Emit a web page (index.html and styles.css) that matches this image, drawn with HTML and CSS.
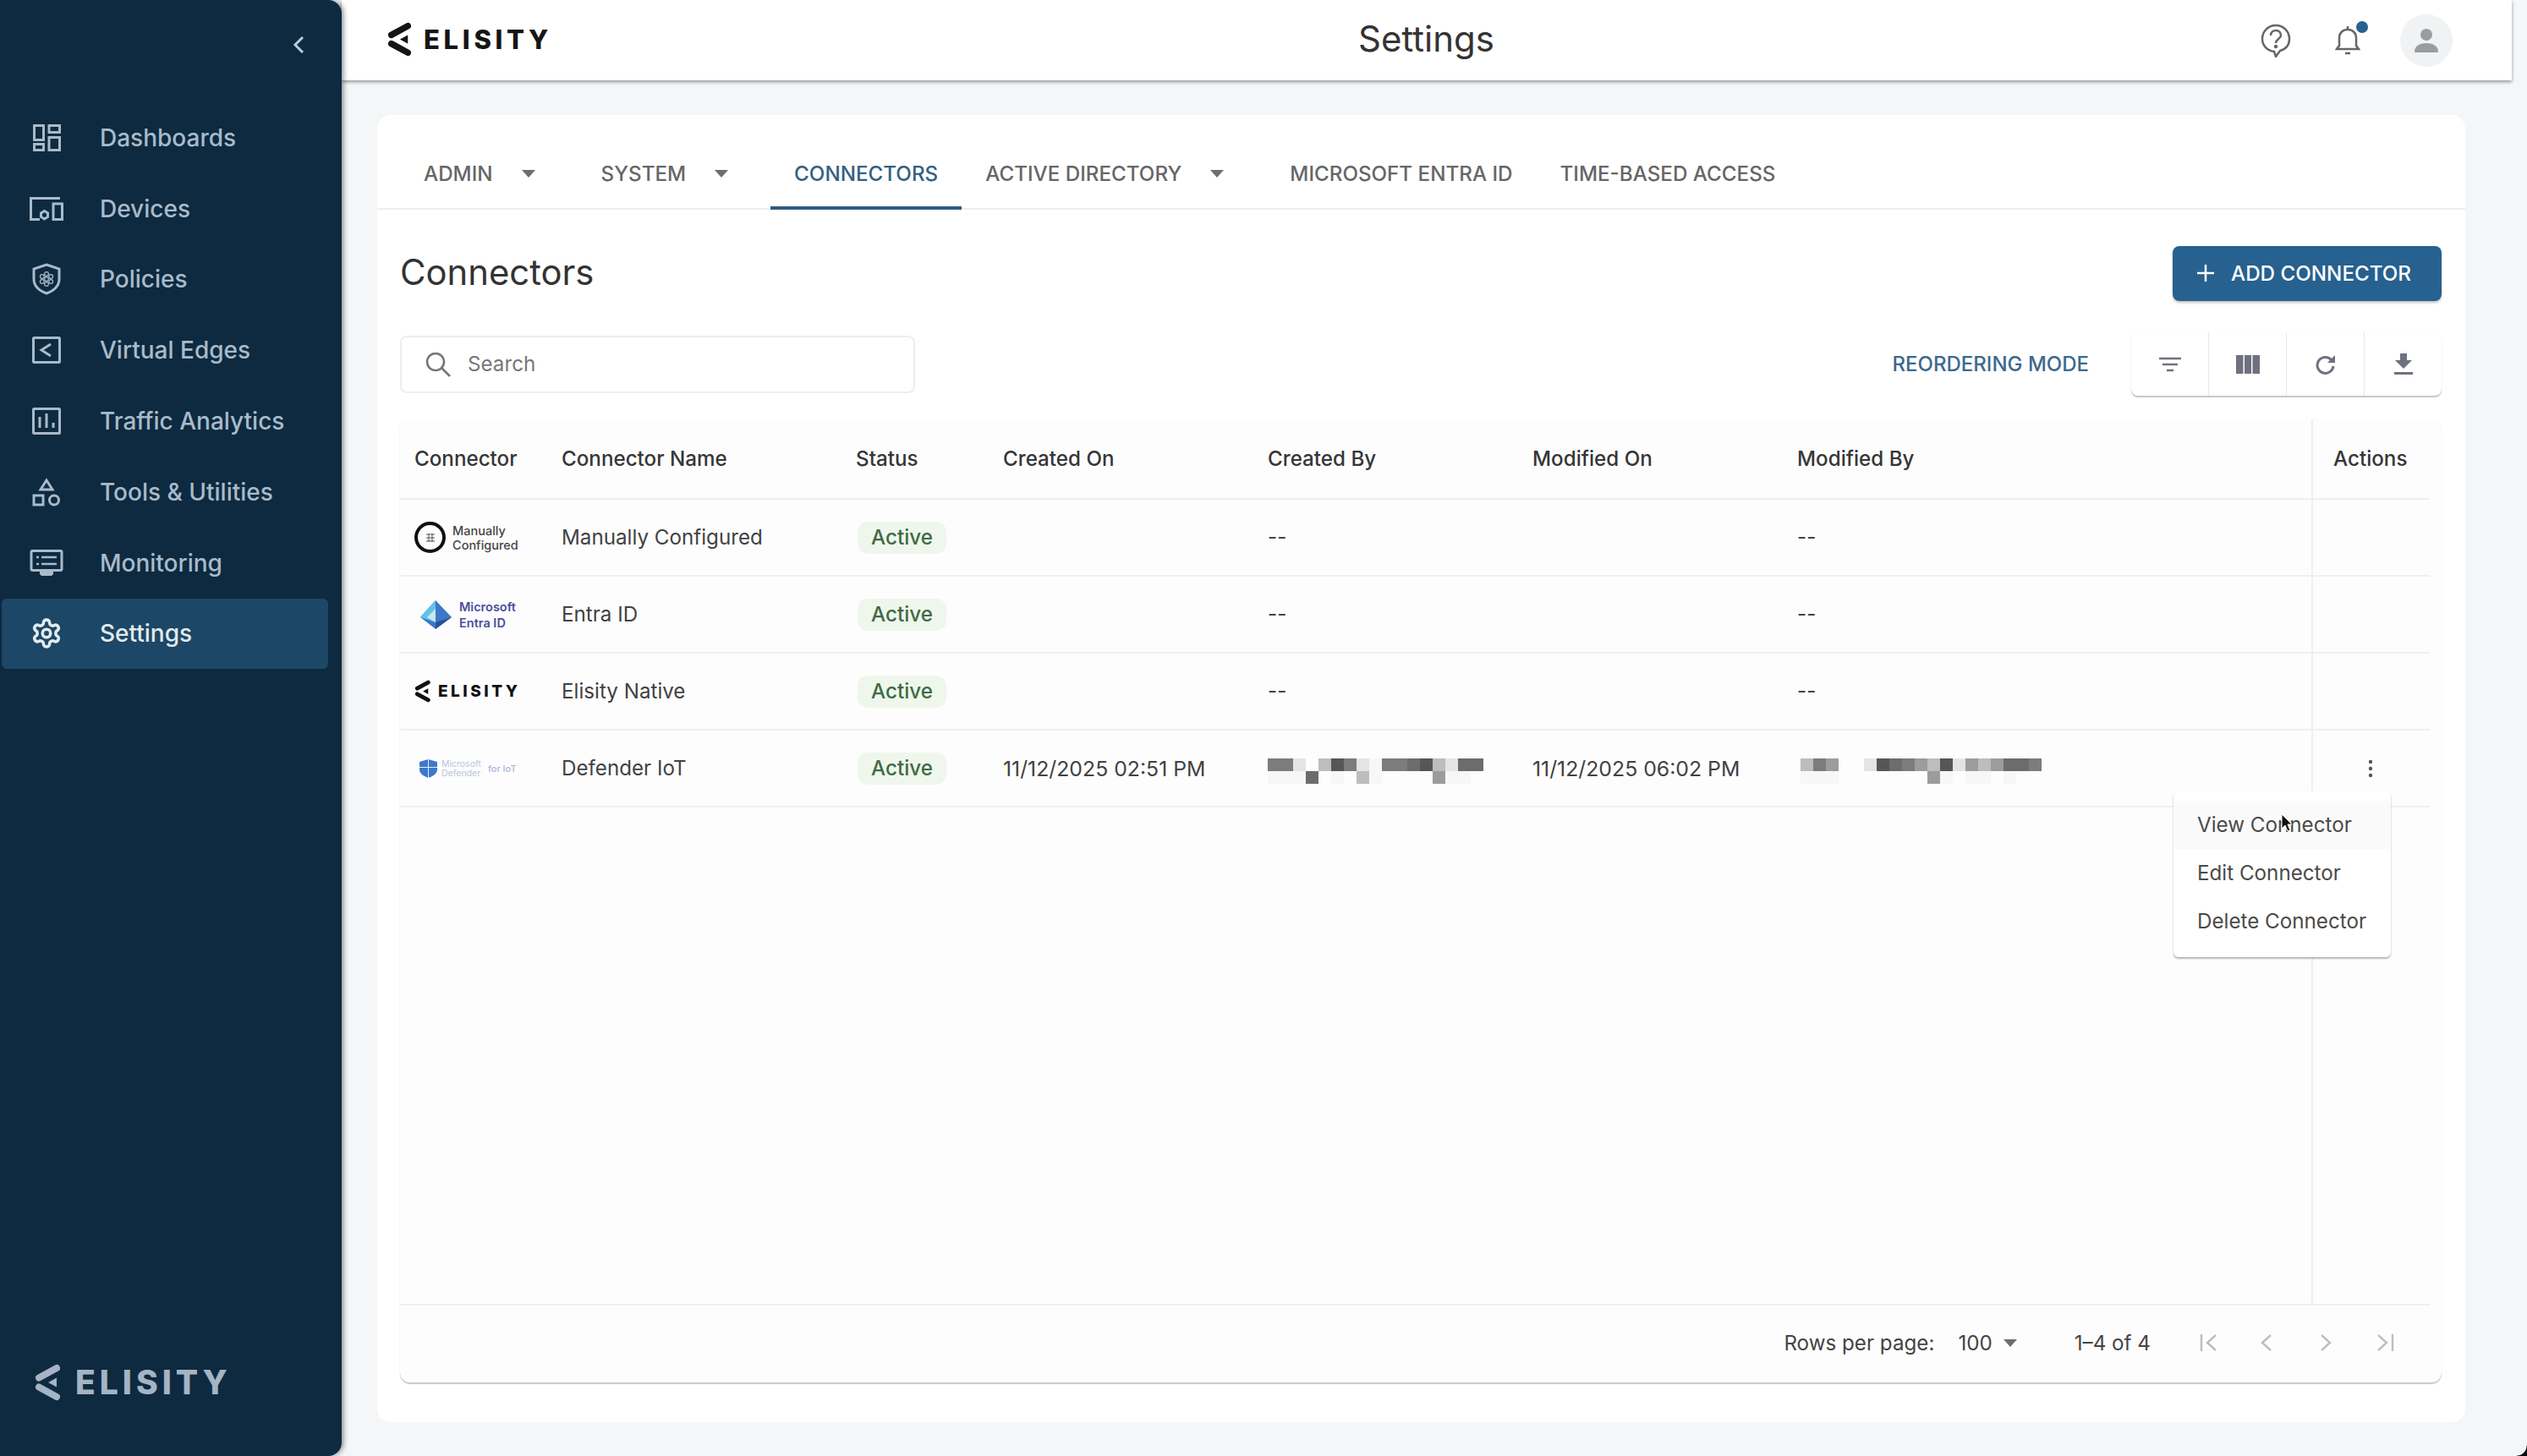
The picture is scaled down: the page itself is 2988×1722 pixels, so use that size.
FILE: index.html
```html
<!DOCTYPE html>
<html lang="en">
<head>
 <meta charset="UTF-8">
 <meta name="viewport" content="width=device-width, initial-scale=1.0">
 <title>Settings</title>
 <link rel="stylesheet" href="styles.css">
</head>
<body>
 <svg class="svg-defs" width="0" height="0">
 <symbol id="elisity-mark" viewBox="0 0 30 44">
 <path d="M26 5 5 16.5M5 27.5 26 39" fill="none" stroke="currentColor" stroke-width="8" stroke-linecap="round"></path>
 <path d="M16 22 26 16.5V27.5Z" fill="currentColor"></path>
 </symbol>
 </svg>
 <div class="shell">
 <aside class="sidebar">
 <div class="collapse-row">
 <svg class="collapse-icon" viewBox="0 0 14 22" fill="none" stroke="currentColor" stroke-width="3"><polyline points="12 2 3 11 12 20"></polyline></svg>
 </div>
 <nav class="side-nav">
 <a class="nav-item"><span class="nav-glyph">
 <svg width="33" height="32" viewBox="0 0 33 32" fill="none" stroke="currentColor" stroke-width="3"><rect x="1.5" y="1.5" width="11" height="17"></rect><rect x="19" y="1.5" width="12.5" height="8"></rect><rect x="1.5" y="23.5" width="11" height="7"></rect><rect x="19" y="15.5" width="12.5" height="15"></rect></svg>
 </span>Dashboards</a>
 <a class="nav-item"><span class="nav-glyph">
 <svg width="40" height="28" viewBox="0 0 40 28" fill="none" stroke="currentColor" stroke-width="3"><path d="M36 1.5H1.5V26.5H12"></path><polygon points="17.5 16.5 21.5 19 21.5 23.5 17.5 26 13.5 23.5 13.5 19"></polygon><rect x="28" y="8" width="10.5" height="18.5"></rect></svg>
 </span>Devices</a>
 <a class="nav-item"><span class="nav-glyph">
 <svg width="34" height="38" viewBox="0 0 34 38" fill="none" stroke="currentColor"><path stroke-width="3" d="M17 2 32 7V19C32 28 25 33 17 36 9 33 2 28 2 19V7Z"></path><g stroke-width="1.2"><circle cx="17" cy="13" r="2.4"></circle><circle cx="22.2" cy="16" r="2.4"></circle><circle cx="22.2" cy="22" r="2.4"></circle><circle cx="17" cy="25" r="2.4"></circle><circle cx="11.8" cy="22" r="2.4"></circle><circle cx="11.8" cy="16" r="2.4"></circle><circle cx="17" cy="19" r="2.4"></circle></g></svg>
 </span>Policies</a>
 <a class="nav-item"><span class="nav-glyph">
 <svg width="34" height="32" viewBox="0 0 34 32" fill="none" stroke="currentColor" stroke-width="3"><rect x="1.5" y="1.5" width="31" height="29" rx="1"></rect><polyline points="22 9 11 16 22 23"></polyline></svg>
 </span>Virtual Edges</a>
 <a class="nav-item"><span class="nav-glyph">
 <svg width="34" height="32" viewBox="0 0 34 32" fill="none" stroke="currentColor" stroke-width="3"><rect x="1.5" y="1.5" width="31" height="29" rx="1"></rect><path d="M9 24V11M17 24V7M25 24V18"></path></svg>
 </span>Traffic Analytics</a>
 <a class="nav-item"><span class="nav-glyph">
 <svg width="35" height="36" viewBox="0 0 35 36" fill="none" stroke="currentColor" stroke-width="3"><polygon points="17 4 24 15 10 15"></polygon><rect x="2" y="22" width="11" height="11"></rect><circle cx="26" cy="27.5" r="5.5"></circle></svg>
 </span>Tools &amp; Utilities</a>
 <a class="nav-item"><span class="nav-glyph">
 <svg width="40" height="32" viewBox="0 0 40 32" fill="none" stroke="currentColor" stroke-width="3"><rect x="2" y="1.5" width="36" height="23" rx="1.5"></rect><path d="M8 9H11M8 17H11M14 9H32M14 17H32" stroke-width="2.5"></path><path d="M12 25H28V29L26 31H14L12 29Z" fill="currentColor" stroke="none"></path></svg>
 </span>Monitoring</a>
 <a class="nav-item nav-active"><span class="nav-glyph">
 <svg width="38" height="38" viewBox="0 0 24 24" fill="none" stroke="currentColor" stroke-width="2.3"><path d="M12.22 2h-.44a2 2 0 0 0-2 2v.18a2 2 0 0 1-1 1.73l-.43.25a2 2 0 0 1-2 0l-.15-.08a2 2 0 0 0-2.73.73l-.22.38a2 2 0 0 0 .73 2.73l.15.1a2 2 0 0 1 1 1.72v.51a2 2 0 0 1-1 1.74l-.15.09a2 2 0 0 0-.73 2.73l.22.38a2 2 0 0 0 2.73.73l.15-.08a2 2 0 0 1 2 0l.43.25a2 2 0 0 1 1 1.73V20a2 2 0 0 0 2 2h.44a2 2 0 0 0 2-2v-.18a2 2 0 0 1 1-1.73l.43-.25a2 2 0 0 1 2 0l.15.08a2 2 0 0 0 2.73-.73l.22-.39a2 2 0 0 0-.73-2.73l-.15-.08a2 2 0 0 1-1-1.74v-.5a2 2 0 0 1 1-1.74l.15-.09a2 2 0 0 0 .73-2.73l-.22-.38a2 2 0 0 0-2.73-.73l-.15.08a2 2 0 0 1-2 0l-.43-.25a2 2 0 0 1-1-1.73V4a2 2 0 0 0-2-2z"></path><circle cx="12" cy="12" r="3"></circle></svg>
 </span>Settings</a>
 </nav>
 <div class="side-brand">
 <svg class="brand-mark" width="30" height="44"><use href="#elisity-mark"></use></svg>
 <span class="brand-word">ELISITY</span>
 </div>
 </aside>

 <div class="main">
 <header class="topbar">
 <div class="top-brand">
 <svg class="brand-mark" width="28" height="41"><use href="#elisity-mark"></use></svg>
 <span class="top-word">ELISITY</span>
 </div>
 <h1 class="page-title">Settings</h1>
 <div class="top-actions">
 <svg class="top-help" width="36" height="40" viewBox="0 0 36 40" fill="none" stroke="currentColor" stroke-width="2.5"><path d="M18 2C9 2 2 9 2 18 2 26 8 32 16 33L18 39 23 32C30 30 34 25 34 18 34 9 27 2 18 2Z"></path><path d="M12 14C12 10 15 8 18 8 22 8 24 11 24 14 24 18 18 18 18 23"></path><circle cx="18" cy="27" r="1" fill="currentColor"></circle></svg>
 <span class="top-bell">
 <svg width="30" height="36" viewBox="0 0 30 36" fill="none" stroke="currentColor" stroke-width="2.5"><path d="M2 28H28L25 24V15C25 9 21 5 15 5 9 5 5 9 5 15V24Z"></path><path d="M15 1V5M12 33H18"></path></svg>
 <span class="bell-dot"></span>
 </span>
 <span class="avatar">
 <svg width="30" height="30" viewBox="0 0 30 30" fill="currentColor"><circle cx="15" cy="8" r="7"></circle><path d="M1 28C1 21 8 18 15 18 22 18 29 21 29 28 29 29 28 29 27 29H3C2 29 1 29 1 28Z"></path></svg>
 </span>
 </div>
 </header>

 <section class="page-card">
 <div class="tabs">
 <a class="tab">ADMIN<span class="caret"></span></a>
 <a class="tab">SYSTEM<span class="caret"></span></a>
 <a class="tab tab-active">CONNECTORS</a>
 <a class="tab">ACTIVE DIRECTORY<span class="caret"></span></a>
 <a class="tab">MICROSOFT ENTRA ID</a>
 <a class="tab">TIME-BASED ACCESS</a>
 </div>

 <div class="panel">
 <div class="panel-head">
 <h2 class="panel-title">Connectors</h2>
 <button class="add-button">
 <svg width="22" height="22" viewBox="0 0 22 22" stroke="currentColor" stroke-width="2.5"><path d="M11 1V21M1 11H21"></path></svg>
 ADD CONNECTOR
 </button>
 </div>

 <div class="panel-tools">
 <div class="search-box">
 <svg width="32" height="32" viewBox="0 0 32 32" fill="none" stroke="currentColor" stroke-width="2.6"><circle cx="13" cy="13" r="10"></circle><path d="M20 20 30 30"></path></svg>
 <span>Search</span>
 </div>
 <a class="reorder-link">REORDERING MODE</a>
 <div class="tool-group">
 <span class="tool-cell">
 <svg width="26" height="18" viewBox="0 0 26 18" fill="none" stroke="currentColor" stroke-width="2.5"><path d="M0 2H26M4 9H22M9 16H17"></path></svg>
 </span>
 <span class="tool-cell">
 <svg width="28" height="22" viewBox="0 0 28 22" fill="currentColor"><rect x="0" y="0" width="8.5" height="22"></rect><rect x="10" y="0" width="8" height="22"></rect><rect x="19.5" y="0" width="8.5" height="22"></rect></svg>
 </span>
 <span class="tool-cell">
 <svg width="26" height="24" viewBox="0 0 26 24" fill="none" stroke="currentColor" stroke-width="3"><path d="M20 7A9.5 9.5 0 1 0 22 14"></path><path d="M24 1V10H15Z" fill="currentColor" stroke="none"></path></svg>
 </span>
 <span class="tool-cell">
 <svg width="22" height="26" viewBox="0 0 22 26" fill="currentColor"><path d="M7 0H15V8H21L11 18 1 8H7Z"></path><rect x="0" y="22" width="22" height="3"></rect></svg>
 </span>
 </div>
 </div>

 <div class="table-card">
 <div class="table-area">
 <table class="data-table">
 <thead>
 <tr>
 <th class="col-logo">Connector</th>
 <th class="col-name">Connector Name</th>
 <th class="col-status">Status</th>
 <th class="col-date">Created On</th>
 <th class="col-date">Created By</th>
 <th class="col-date">Modified On</th>
 <th>Modified By</th>
 <th class="col-actions">Actions</th>
 </tr>
 </thead>
 <tbody>
 <tr>
 <td>
 <div class="logo-manual">
 <span class="manual-ring">
 <svg width="12" height="12" viewBox="0 0 12 12" stroke="currentColor" stroke-width="1"><path d="M1 2H11M1 6H11M1 10H11M4 1V11M8 1V11"></path></svg>
 </span>
 <span class="logo-lines">Manually<br>Configured</span>
 </div>
 </td>
 <td>Manually Configured</td>
 <td><span class="chip">Active</span></td>
 <td></td>
 <td>--</td>
 <td></td>
 <td>--</td>
 <td class="col-actions"></td>
 </tr>
 <tr>
 <td>
 <div class="logo-entra">
 <svg width="37" height="34" viewBox="0 0 37 34"><polygon points="18 0 37 20 18 34 0 20" fill="#3c78c8"></polygon><polygon points="18 0 0 20 18 26" fill="#62c3e8"></polygon><polygon points="18 10 18 26 8 20" fill="#c5e8ef"></polygon><polygon points="18 26 37 20 18 34" fill="#2c4f9e"></polygon></svg>
 <span class="logo-lines">Microsoft<br>Entra ID</span>
 </div>
 </td>
 <td>Entra ID</td>
 <td><span class="chip">Active</span></td>
 <td></td>
 <td>--</td>
 <td></td>
 <td>--</td>
 <td class="col-actions"></td>
 </tr>
 <tr>
 <td>
 <div class="logo-elisity">
 <svg class="brand-mark" width="19" height="27"><use href="#elisity-mark"></use></svg>
 <span class="logo-word">ELISITY</span>
 </div>
 </td>
 <td>Elisity Native</td>
 <td><span class="chip">Active</span></td>
 <td></td>
 <td>--</td>
 <td></td>
 <td>--</td>
 <td class="col-actions"></td>
 </tr>
 <tr>
 <td>
 <div class="logo-defender">
 <svg width="21" height="22" viewBox="0 0 21 22"><path d="M10.5 0 21 3V12C21 17 16 20 10.5 22 5 20 0 17 0 12V3Z" fill="#3d78cc"></path><path d="M10 0H11V22H10ZM0 9H21V10H0Z" fill="#e8eefa"></path></svg>
 <span class="defender-name">Microsoft<br>Defender</span>
 <span class="defender-iot">for IoT</span>
 </div>
 </td>
 <td>Defender IoT</td>
 <td><span class="chip">Active</span></td>
 <td class="date-cell">11/12/2025 02:51 PM</td>
 <td>
 <div class="mosaic mosaic-created">
 <i class="s3"></i><i class="s3"></i><i class="s6"></i><i></i><i class="s5"></i><i class="s1"></i><i class="s3"></i><i class="s6"></i><i class="s7"></i><i class="s3"></i><i class="s3"></i><i class="s2"></i><i class="s1"></i><i class="s5"></i><i class="s6"></i><i class="s2"></i><i class="s2"></i>
 <i class="s7"></i><i class="s7"></i><i class="s7"></i><i class="s2"></i><i></i><i class="s7"></i><i></i><i class="s5"></i><i class="s7"></i><i></i><i></i><i></i><i></i><i class="s4"></i><i class="s7"></i><i class="s7"></i><i></i>
 </div>
 </td>
 <td class="date-cell">11/12/2025 06:02 PM</td>
 <td>
 <div class="mosaic mosaic-modified">
 <i class="s5"></i><i class="s3"></i><i class="s4"></i><i></i><i></i><i class="s6"></i><i class="s1"></i><i class="s2"></i><i class="s3"></i><i class="s4"></i><i class="s5"></i><i class="s1"></i><i class="s6"></i><i class="s4"></i><i class="s5"></i><i class="s4"></i><i class="s2"></i><i class="s2"></i><i class="s3"></i>
 <i class="s7"></i><i class="s7"></i><i class="s7"></i><i></i><i></i><i></i><i></i><i></i><i></i><i></i><i class="s4"></i><i class="s7"></i><i></i><i class="s7"></i><i class="s7"></i><i></i><i class="s7"></i><i></i><i></i>
 </div>
 </td>
 <td class="col-actions">
 <svg class="kebab" width="6" height="22" viewBox="0 0 6 22" fill="currentColor"><circle cx="3" cy="3" r="2.2"></circle><circle cx="3" cy="11" r="2.2"></circle><circle cx="3" cy="19" r="2.2"></circle></svg>
 </td>
 </tr>
 </tbody>
 </table>
 <div class="actions-rule"></div>
 </div>

 <div class="table-foot">
 <span class="rows-label">Rows per page:</span>
 <span class="rows-value">100<span class="caret"></span></span>
 <span class="rows-range">1–4 of 4</span>
 <span class="pager">
 <svg width="24" height="24" viewBox="0 0 24 24" fill="none" stroke="currentColor" stroke-width="2.4"><path d="M5 2V22M22 3 12 12 22 21"></path></svg>
 </span>
 <span class="pager">
 <svg width="24" height="24" viewBox="0 0 24 24" fill="none" stroke="currentColor" stroke-width="2.4"><path d="M17 3 7 12 17 21"></path></svg>
 </span>
 <span class="pager">
 <svg width="24" height="24" viewBox="0 0 24 24" fill="none" stroke="currentColor" stroke-width="2.4"><path d="M7 3 17 12 7 21"></path></svg>
 </span>
 <span class="pager">
 <svg width="24" height="24" viewBox="0 0 24 24" fill="none" stroke="currentColor" stroke-width="2.4"><path d="M21 2V22M4 3 14 12 4 21"></path></svg>
 </span>
 </div>

 <div class="row-menu">
 <div class="menu-item menu-hover">View Connector</div>
 <div class="menu-item">Edit Connector</div>
 <div class="menu-item">Delete Connector</div>
 <svg class="cursor-arrow" width="14" height="22" viewBox="0 0 14 22"><path d="M1 1V18L5 14 8 21 11 20 8 13H13Z" fill="#111" stroke="#fff" stroke-width="1"></path></svg>
 </div>
 </div>
 </div>
 </section>
 </div>
 </div>
 <div class="screen-corner"></div>
</body>
</html>
```

FILE: styles.css
```css
* {
 margin: 0;
 padding: 0;
 box-sizing: border-box;
 font-family: Inter, "Noto Sans", sans-serif;
}

body {
 position: relative;
 width: 2988px;
 height: 1722px;
 overflow: hidden;
 background: #f5f6f7;
 color: #3c3c3c;
}

.svg-defs {
 position: absolute;
}

.shell {
 display: flex;
 height: 100%;
 padding-right: 18px;
}

/* sidebar */
.sidebar {
 flex: 0 0 404px;
 display: flex;
 flex-direction: column;
 background: #0d2a40;
 border-radius: 0 16px 16px 0;
 box-shadow: 2px 0 6px rgba(0, 0, 0, 0.45);
 color: #a9bac9;
 z-index: 2;
}

.collapse-row {
 display: flex;
 justify-content: flex-end;
 padding: 42px 44px 0 0;
 height: 121px;
}

.collapse-icon {
 width: 14px;
 height: 22px;
 color: #bccad6;
}

.side-nav {
 display: flex;
 flex-direction: column;
 padding-right: 16px;
 padding-left: 2px;
}

.nav-item {
 display: flex;
 align-items: center;
 height: 83.8px;
 font-size: 28px;
 font-weight: 500;
 border-radius: 6px;
}

.nav-glyph {
 display: flex;
 justify-content: center;
 align-items: center;
 width: 106px;
 margin-right: 10px;
}

.nav-active {
 background: #1c4766;
 color: #e3e9ee;
}

.side-brand {
 display: flex;
 align-items: center;
 gap: 18px;
 margin-top: auto;
 padding: 0 0 65px 41px;
 color: #a4b4c4;
}

.brand-word {
 font-size: 39px;
 font-weight: 800;
 letter-spacing: 5px;
 line-height: 44px;
}

/* top bar */
.main {
 flex: 1;
 display: flex;
 flex-direction: column;
 min-width: 0;
}

.topbar {
 display: grid;
 grid-template-columns: 1fr auto 1fr;
 align-items: center;
 flex: 0 0 95px;
 padding: 0 70px 0 54px;
 background: #fff;
 box-shadow: 0 2px 4px rgba(0, 0, 0, 0.4);
 z-index: 1;
}

.top-brand {
 display: flex;
 align-items: center;
 gap: 15px;
 margin-top: -3px;
 color: #151515;
}

.top-word {
 font-size: 31px;
 font-weight: 800;
 letter-spacing: 4.7px;
}

.page-title {
 margin-top: -3px;
 margin-left: 15px;
 font-size: 42px;
 font-weight: 400;
 line-height: 50px;
 color: #333;
}

.top-actions {
 display: flex;
 align-items: center;
 justify-content: flex-end;
 color: #666;
}

.top-bell {
 position: relative;
 display: flex;
 margin-left: 52px;
}

.bell-dot {
 position: absolute;
 top: -5px;
 right: -9px;
 width: 14px;
 height: 14px;
 border-radius: 50%;
 background: #26618f;
}

.avatar {
 display: flex;
 align-items: center;
 justify-content: center;
 width: 62px;
 height: 62px;
 margin-left: 47px;
 border-radius: 50%;
 background: #f1f2f3;
 color: #9b9c9d;
}

/* page card */
.page-card {
 flex: 1;
 display: flex;
 flex-direction: column;
 margin: 41px 55px 40px 42px;
 background: #fff;
 border-radius: 16px;
}

.tabs {
 display: flex;
 align-items: flex-end;
 flex: 0 0 112px;
 padding-left: 27px;
 border-bottom: 2px solid #eceef0;
}

.tab {
 display: flex;
 align-items: center;
 height: 84px;
 margin-bottom: -2px;
 padding: 3px 28px 0;
 font-size: 24.2px;
 font-weight: 500;
 color: #666;
 border-bottom: 4px solid transparent;
}

.tab-active {
 color: #34607f;
 border-bottom-color: #2f5b7c;
}

.tab .caret {
 margin: 0 22px 0 34px;
}

.caret {
 display: inline-block;
 width: 0;
 height: 0;
 border-left: 8px solid transparent;
 border-right: 8px solid transparent;
 border-top: 9px solid #6e6e6e;
}

.panel {
 flex: 1;
 display: flex;
 flex-direction: column;
 min-height: 0;
 padding: 43px 28px 47px 27px;
}

.panel-head {
 display: flex;
 align-items: center;
 justify-content: space-between;
 height: 65px;
}

.panel-title {
 margin-top: -3px;
 font-size: 41.8px;
 font-weight: 400;
 color: #333;
}

.add-button {
 display: flex;
 align-items: center;
 gap: 19px;
 width: 318px;
 height: 65px;
 padding: 0 0 1px 28px;
 border: none;
 border-radius: 8px;
 background: #26618f;
 box-shadow: 0 2px 3px rgba(0, 0, 0, 0.25);
 color: #fff;
 font-size: 24.2px;
 font-weight: 500;
}

.panel-tools {
 display: flex;
 align-items: center;
 height: 75px;
 margin-top: 37px;
}

.search-box {
 display: flex;
 align-items: center;
 gap: 19px;
 width: 609px;
 height: 68px;
 padding-left: 27px;
 border: 2px solid #eeeeee;
 border-radius: 8px;
 color: #777;
 font-size: 24.2px;
}

.reorder-link {
 margin-left: auto;
 margin-right: 50px;
 font-size: 24px;
 font-weight: 500;
 color: #3b6a8f;
}

.tool-group {
 display: flex;
 width: 367px;
 height: 75px;
 border-radius: 8px;
 box-shadow: 0 2px 1px rgba(0, 0, 0, 0.22), 0 0 2px rgba(0, 0, 0, 0.05);
 color: #6f7180;
}

.tool-cell {
 flex: 1;
 display: flex;
 align-items: center;
 justify-content: center;
 border-left: 1px solid #e7e7e7;
}

.tool-cell:first-child {
 border-left: none;
}

/* table */
.table-card {
 position: relative;
 flex: 1;
 display: flex;
 flex-direction: column;
 margin-top: 28px;
 padding-right: 14px;
 background: #fdfdfe;
 border-radius: 12px;
 box-shadow: 0 2px 1px rgba(0, 0, 0, 0.2), 0 0 2px rgba(0, 0, 0, 0.06);
}

.table-area {
 position: relative;
 flex: 1;
}

.data-table {
 width: 100%;
 table-layout: fixed;
 border-collapse: separate;
 border-spacing: 0;
 font-size: 24.2px;
 color: #424242;
}

.data-table th {
 height: 95px;
 padding-left: 17px;
 text-align: left;
 font-weight: 500;
 color: #363636;
 border-bottom: 2px solid #efefef;
}

.data-table td {
 height: 91px;
 padding-left: 17px;
 border-bottom: 2px solid #f0f0f0;
}

.data-table .date-cell {
 font-size: 24.8px;
}

.col-logo {
 width: 174px;
}

.col-name {
 width: 348px;
}

.col-status {
 width: 174px;
}

.col-date {
 width: 313px;
}

.data-table .col-actions {
 width: 140px;
 padding-left: 26px;
}

.actions-rule {
 position: absolute;
 top: 0;
 bottom: 0;
 left: 2260px;
 width: 2px;
 background: #efefef;
}

.chip {
 display: inline-block;
 margin-left: 2px;
 padding: 0 16px;
 height: 38px;
 line-height: 38px;
 border-radius: 12px;
 background: #eff7ec;
 color: #3f6b46;
 font-weight: 500;
}

.kebab {
 display: block;
 margin-left: 41px;
 color: #555;
}

/* connector logos */
.logo-manual,
.logo-entra,
.logo-elisity,
.logo-defender {
 display: flex;
 align-items: center;
}

.logo-manual {
 gap: 8px;
}

.manual-ring {
 display: flex;
 align-items: center;
 justify-content: center;
 width: 37px;
 height: 37px;
 border: 4px solid #111;
 border-radius: 50%;
 color: #555;
}

.logo-lines {
 font-size: 14.5px;
 font-weight: 500;
 line-height: 17px;
 color: #454545;
}

.logo-entra {
 gap: 9px;
 padding-left: 7px;
}

.logo-entra .logo-lines {
 font-size: 14.5px;
 font-weight: 600;
 line-height: 19px;
 color: #4a4f9c;
}

.logo-elisity {
 gap: 9px;
 color: #111;
}

.logo-word {
 font-size: 19px;
 font-weight: 800;
 letter-spacing: 3.5px;
}

.logo-defender {
 gap: 5px;
 padding-left: 6px;
}

.defender-name {
 font-size: 10.5px;
 line-height: 11px;
 color: #bcc5da;
}

.defender-iot {
 margin-left: 3px;
 font-size: 11px;
 font-weight: 500;
 color: #aab6d8;
}

/* pixelated names */
.mosaic {
 display: grid;
 grid-template-rows: 15px 15px;
 margin-top: 6px;
}

.mosaic-created {
 grid-template-columns: repeat(17, 15px);
}

.mosaic-modified {
 grid-template-columns: repeat(19, 15px);
 margin-left: 4px;
}

.s1 { background: #565656; }
.s2 { background: #6c6c6c; }
.s3 { background: #7c7c7c; }
.s4 { background: #9c9c9c; }
.s5 { background: #bdbdbd; }
.s6 { background: #e4e4e4; }
.s7 { background: #f7f7f7; }

/* table footer */
.table-foot {
 display: flex;
 align-items: center;
 flex: 0 0 93px;
 padding-right: 18px;
 padding-bottom: 3px;
 justify-content: flex-end;
 border-top: 2px solid #efefef;
 font-size: 24.2px;
 color: #444;
}

.rows-value {
 display: flex;
 align-items: center;
 gap: 13px;
 margin: 0 68px 0 28px;
}

.rows-range {
 margin-right: 32px;
}

.pager {
 display: flex;
 align-items: center;
 justify-content: center;
 width: 70px;
 color: #bdbdbd;
}

/* kebab menu */
.row-menu {
 position: absolute;
 top: 440px;
 left: 2097px;
 width: 257px;
 padding: 11px 0 14px;
 background: #fff;
 border-radius: 6px;
 box-shadow: 0 2px 2px rgba(0, 0, 0, 0.28), 0 0 3px rgba(0, 0, 0, 0.04);
 z-index: 3;
}

.menu-item {
 display: flex;
 align-items: center;
 height: 57px;
 padding-left: 28px;
 font-size: 24.2px;
 color: #4a4a4a;
}

.menu-hover {
 background: #fafafa;
}

.cursor-arrow {
 position: absolute;
 top: 26px;
 left: 127px;
}

.screen-corner {
 position: absolute;
 right: 0;
 bottom: 0;
 width: 12px;
 height: 12px;
 background: radial-gradient(circle at 0 0, transparent 11px, #0b0b0b 12px);
}
```
